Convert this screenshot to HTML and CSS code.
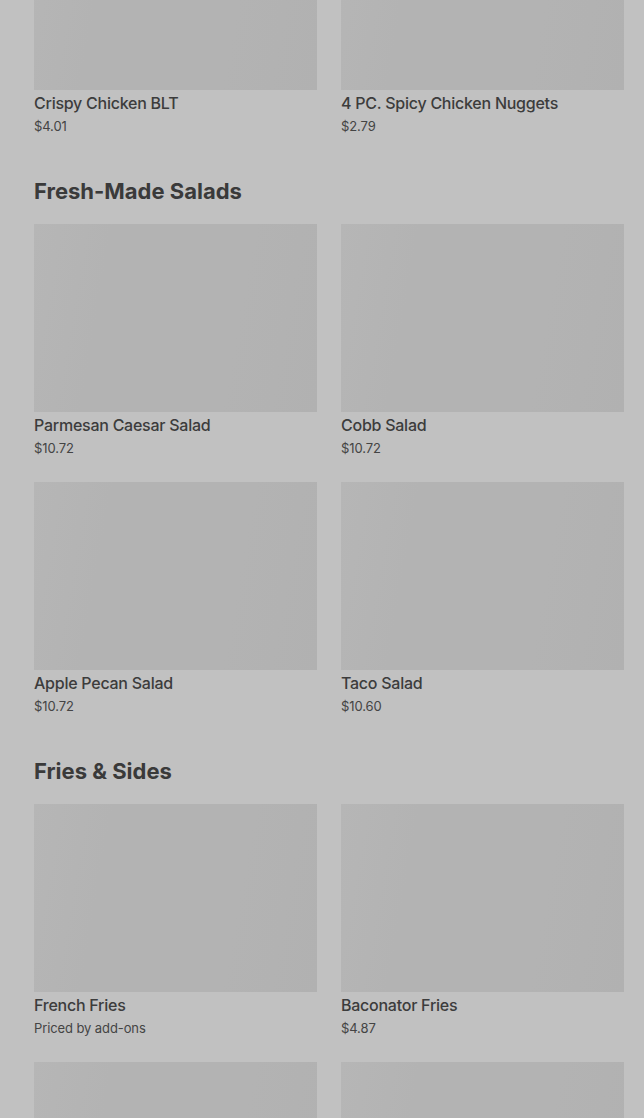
FILE: index.html
```html
<!DOCTYPE html>
<html lang="en">

<head>
    <meta charset="UTF-8">
    <meta name="viewport" content="width=device-width, initial-scale=1.0">
    <title>Menu</title>
    <link rel="stylesheet" href="styles.css">
</head>

<body>
    <div class="menu">
        <!-- end of the previous section, scrolled past -->
        <section class="section section-cut">
            <div class="items">
                <div class="item">
                    <div class="thumb"></div>
                    <div class="name">Crispy Chicken BLT</div>
                    <div class="price">$4.01</div>
                </div>
                <div class="item">
                    <div class="thumb"></div>
                    <div class="name">4 PC. Spicy Chicken Nuggets</div>
                    <div class="price">$2.79</div>
                </div>
            </div>
        </section>

        <section class="section">
            <h2>Fresh-Made Salads</h2>
            <div class="items">
                <div class="item">
                    <div class="thumb"></div>
                    <div class="name">Parmesan Caesar Salad</div>
                    <div class="price">$10.72</div>
                </div>
                <div class="item">
                    <div class="thumb"></div>
                    <div class="name">Cobb Salad</div>
                    <div class="price">$10.72</div>
                </div>
                <div class="item">
                    <div class="thumb"></div>
                    <div class="name">Apple Pecan Salad</div>
                    <div class="price">$10.72</div>
                </div>
                <div class="item">
                    <div class="thumb"></div>
                    <div class="name">Taco Salad</div>
                    <div class="price">$10.60</div>
                </div>
            </div>
        </section>

        <section class="section">
            <h2>Fries &amp; Sides</h2>
            <div class="items">
                <div class="item">
                    <div class="thumb"></div>
                    <div class="name">French Fries</div>
                    <div class="price">Priced by add-ons</div>
                </div>
                <div class="item">
                    <div class="thumb"></div>
                    <div class="name">Baconator Fries</div>
                    <div class="price">$4.87</div>
                </div>
                <!-- next row, only the tops of the pictures show -->
                <div class="item">
                    <div class="thumb"></div>
                </div>
                <div class="item">
                    <div class="thumb"></div>
                </div>
            </div>
        </section>
    </div>
</body>

</html>
```

FILE: styles.css
```css
html,
body {
    height: 100%;
    overflow: hidden;
}

body {
    margin: 0;
    background-color: #c1c1c1; /* dimmed page behind a backdrop */
    color: #3b3b3b;
    font-family: "Inter", "Roboto", sans-serif;
}

.menu {
    padding: 0 20px 0 34px;
    margin-top: -98px; /* page is scrolled down */
}

.section {
    padding-top: 40px;
}

.section-cut {
    padding-top: 0;
}

.section h2 {
    margin: 0 0 18px;
    font-size: 22px;
    line-height: 30px;
    font-weight: 700;
    letter-spacing: 0;
    color: #3a3a3a;
}

.items {
    display: grid;
    grid-template-columns: repeat(2, 1fr);
    column-gap: 24px;
    row-gap: 24px;
}

.item .thumb {
    height: 188px;
    background: linear-gradient(100deg, #b6b6b6 0%, #b3b3b3 25%, #b3b3b3 70%, #b1b1b1 100%);
}

.item .name {
    padding-top: 2px;
    font-size: 16px;
    line-height: 22px;
    font-weight: 500;
    color: #3c3c3c;
    letter-spacing: -0.25px;
}

.item .price {
    margin-top: 2px;
    font-size: 13px;
    line-height: 20px;
    color: #444444;
    letter-spacing: -0.1px;
}
```
